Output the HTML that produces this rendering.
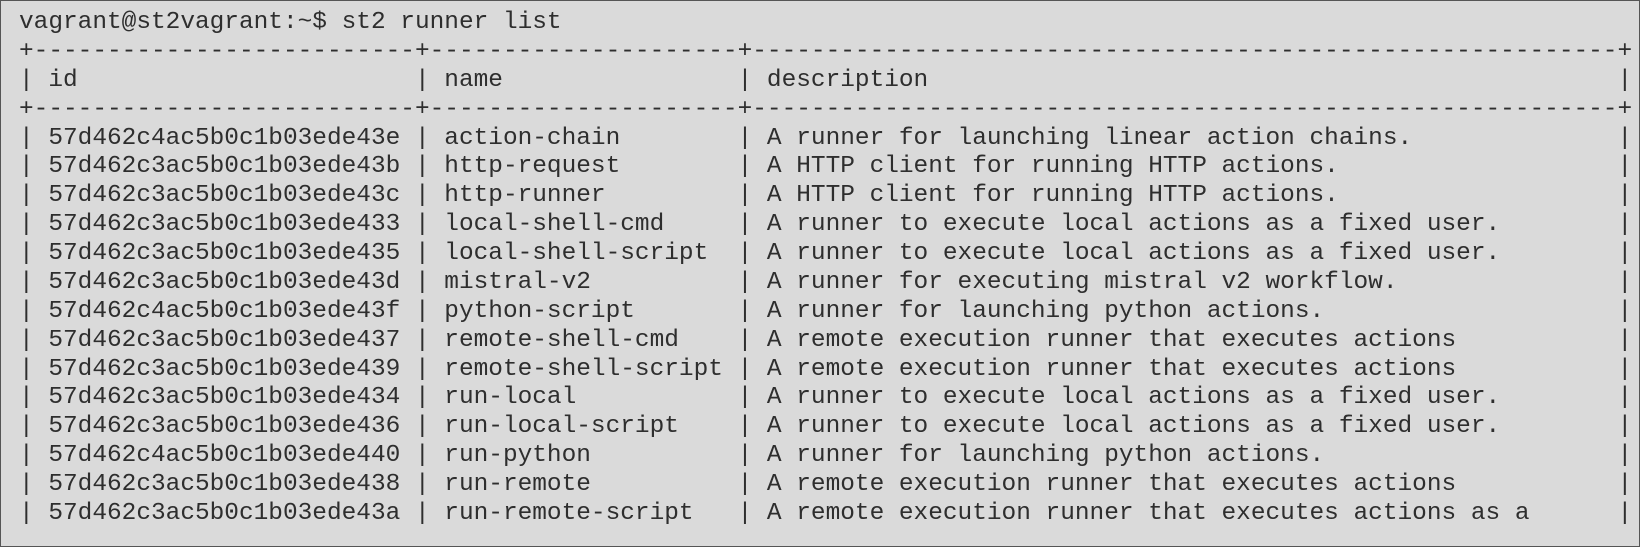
<!DOCTYPE html>
<html><head><meta charset="utf-8"><style>
html,body{margin:0;padding:0;}
body{width:1640px;height:547px;background:#dadada;overflow:hidden;position:relative;box-sizing:border-box;border:1px solid #555;}
pre{position:absolute;left:18px;top:8px;margin:0;font-family:"Liberation Mono",monospace;font-size:24.45px;line-height:28.87px;color:#2e2e2e;}
</style></head><body><pre>vagrant@st2vagrant:~$ st2 runner list
+--------------------------+---------------------+-----------------------------------------------------------+
| id                       | name                | description                                               |
+--------------------------+---------------------+-----------------------------------------------------------+
| 57d462c4ac5b0c1b03ede43e | action-chain        | A runner for launching linear action chains.              |
| 57d462c3ac5b0c1b03ede43b | http-request        | A HTTP client for running HTTP actions.                   |
| 57d462c3ac5b0c1b03ede43c | http-runner         | A HTTP client for running HTTP actions.                   |
| 57d462c3ac5b0c1b03ede433 | local-shell-cmd     | A runner to execute local actions as a fixed user.        |
| 57d462c3ac5b0c1b03ede435 | local-shell-script  | A runner to execute local actions as a fixed user.        |
| 57d462c3ac5b0c1b03ede43d | mistral-v2          | A runner for executing mistral v2 workflow.               |
| 57d462c4ac5b0c1b03ede43f | python-script       | A runner for launching python actions.                    |
| 57d462c3ac5b0c1b03ede437 | remote-shell-cmd    | A remote execution runner that executes actions           |
| 57d462c3ac5b0c1b03ede439 | remote-shell-script | A remote execution runner that executes actions           |
| 57d462c3ac5b0c1b03ede434 | run-local           | A runner to execute local actions as a fixed user.        |
| 57d462c3ac5b0c1b03ede436 | run-local-script    | A runner to execute local actions as a fixed user.        |
| 57d462c4ac5b0c1b03ede440 | run-python          | A runner for launching python actions.                    |
| 57d462c3ac5b0c1b03ede438 | run-remote          | A remote execution runner that executes actions           |
| 57d462c3ac5b0c1b03ede43a | run-remote-script   | A remote execution runner that executes actions as a      |</pre></body></html>
